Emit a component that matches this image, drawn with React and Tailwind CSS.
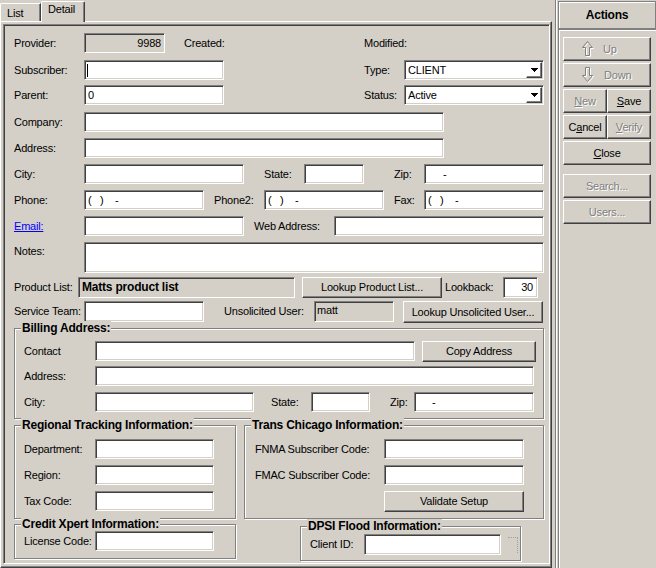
import React from 'react';

// classic win2000 bevels
const sunken = 'border border-t-[#808080] border-l-[#808080] border-b-white border-r-white shadow-[inset_1px_1px_0_#404040,inset_-1px_-1px_0_#d4d0c8]';
const raised = 'border border-t-white border-l-white border-b-[#404040] border-r-[#404040] shadow-[inset_-1px_-1px_0_#808080]';
const etched = 'border border-[#808080] shadow-[inset_1px_1px_0_#ffffff,1px_1px_0_#ffffff]';
const dim = 'text-[#808080] [text-shadow:1px_1px_0_#ffffff]';

function Field({ w, h = 'h-[20px]', gray, className = '', children }) {
  return (
    <div className={`${sunken} ${w} ${h} ${gray ? 'bg-[#d4d0c8]' : 'bg-white'} flex shrink-0 items-center overflow-hidden whitespace-pre ${className}`}>
      {children}
    </div>
  );
}

function Btn({ w, h, disabled, className = '', children }) {
  return (
    <div className={`${raised} ${w} ${h} flex shrink-0 items-center bg-[#d4d0c8] ${disabled ? dim : ''} ${className || 'justify-center'}`}>
      {children}
    </div>
  );
}

function Group({ title, className = '', children }) {
  return (
    <div className={`relative shrink-0 ${etched} ${className}`}>
      <span className="absolute left-[6px] top-[-8px] bg-[#d4d0c8] px-px text-[12px] font-bold leading-[14px] whitespace-nowrap">{title}</span>
      {children}
    </div>
  );
}

function Select({ value }) {
  return (
    <div className={`${sunken} flex h-[20px] w-[140px] shrink-0 items-center bg-white pl-[3px] pr-px`}>
      <span className="flex-1">{value}</span>
      <div className={`${raised} flex h-[16px] w-[16px] items-center justify-center`}>
        <svg width="7" height="4" viewBox="0 0 7 4">
          <path d="M0 0h7v1h-1v1h-1v1h-1v1h-1v-1h-1v-1h-1v-1h-1z" fill="#000" />
        </svg>
      </div>
    </div>
  );
}

function Arrow({ down }) {
  const d = down
    ? 'M5.5 14.5 L10.5 8.5 H7.5 V0.5 H3.5 V8.5 H0.5 Z'
    : 'M5.5 0.5 L10.5 6.5 H7.5 V14.5 H3.5 V6.5 H0.5 Z';
  return (
    <svg width="12" height="16" viewBox="0 0 12 16" className="shrink-0">
      <path d={d} transform="translate(1 1)" fill="none" stroke="#ffffff" />
      <path d={d} fill="none" stroke="#808080" />
    </svg>
  );
}

function Label({ w, className = '', children }) {
  return <span className={`${w} shrink-0 whitespace-nowrap ${className}`}>{children}</span>;
}

export default function App() {
  return (
    <div className="flex h-[568px] w-[656px] overflow-hidden bg-[#d4d0c8] font-['Liberation_Sans',Arial,sans-serif] text-[11px] leading-[13px] tracking-[-0.2px] text-black">
      {/* tab control */}
      <div className="flex w-[552px] shrink-0 flex-col">
        <div className="flex h-[21px] items-end">
          <div className="h-[18px] w-[41px] rounded-tl-[2px] border-l border-t border-white border-r border-r-[#404040] pl-[6px] pt-[3px] shadow-[inset_-1px_0_0_#808080]">List</div>
          <div className="relative z-10 -mb-px h-[21px] w-[44px] rounded-t-[2px] border-l border-t border-white border-r border-r-[#404040] bg-[#d4d0c8] pl-[6px] pt-px shadow-[inset_-1px_0_0_#808080]">Detail</div>
        </div>
        <div className="h-[547px] border border-t-white border-l-white border-r-[#404040] border-b-[#404040] pl-[2px] pt-[2px] shadow-[inset_-1px_-1px_0_#808080]">
          <div className={`${sunken} flex h-[540px] w-[547px] flex-col pl-[10px]`}>
            {/* header rows */}
            <div className="mt-[8px] flex h-[20px] items-center">
              <Label w="w-[70px]">Provider:</Label>
              <Field w="w-[81px]" gray className="justify-end pr-[3px]">9988</Field>
              <Label w="w-[180px]" className="ml-[19px]">Created:</Label>
              <Label w="w-[60px]">Modified:</Label>
            </div>
            <div className="mt-[7px] flex h-[20px] items-center">
              <Label w="w-[70px]">Subscriber:</Label>
              <Field w="w-[140px]" className="pl-[2px]"><span className="h-[13px] w-px bg-black" /></Field>
              <Label w="w-[40px]" className="ml-[140px]">Type:</Label>
              <Select value="CLIENT" />
            </div>
            <div className="mt-[5px] flex h-[20px] items-center">
              <Label w="w-[70px]">Parent:</Label>
              <Field w="w-[140px]" className="pl-[3px]">0</Field>
              <Label w="w-[40px]" className="ml-[140px]">Status:</Label>
              <Select value="Active" />
            </div>
            <div className="mt-[7px] flex h-[20px] items-center">
              <Label w="w-[70px]">Company:</Label>
              <Field w="w-[360px]" />
            </div>
            <div className="mt-[6px] flex h-[20px] items-center">
              <Label w="w-[70px]">Address:</Label>
              <Field w="w-[360px]" />
            </div>
            <div className="mt-[6px] flex h-[20px] items-center">
              <Label w="w-[70px]">City:</Label>
              <Field w="w-[160px]" />
              <Label w="w-[40px]" className="ml-[20px]">State:</Label>
              <Field w="w-[60px]" />
              <Label w="w-[30px]" className="ml-[30px]">Zip:</Label>
              <Field w="w-[120px]" className="pl-[18px]">-</Field>
            </div>
            <div className="mt-[6px] flex h-[20px] items-center">
              <Label w="w-[70px]">Phone:</Label>
              <Field w="w-[120px]" className="pl-[3px]">{'(   )    -'}</Field>
              <Label w="w-[50px]" className="ml-[10px]">Phone2:</Label>
              <Field w="w-[120px]" className="pl-[3px]">{'(   )    -'}</Field>
              <Label w="w-[30px]" className="ml-[10px]">Fax:</Label>
              <Field w="w-[120px]" className="pl-[3px]">{'(   )    -'}</Field>
            </div>
            <div className="mt-[6px] flex h-[20px] items-center">
              <Label w="w-[70px]"><span className="text-[#0000ff] underline">Email:</span></Label>
              <Field w="w-[160px]" />
              <Label w="w-[80px]" className="ml-[10px]">Web Address:</Label>
              <Field w="w-[210px]" />
            </div>
            <div className="mt-[6px] flex h-[31px] items-start">
              <Label w="w-[70px]" className="pt-[3px]">Notes:</Label>
              <Field w="w-[460px]" h="h-[31px]" />
            </div>
            <div className="mt-[3px] flex h-[22px] items-center">
              <Label w="w-[64px]">Product List:</Label>
              <Field w="w-[217px]" h="h-[21px]" gray className="pl-[3px] text-[12px] font-bold">Matts product list</Field>
              <Btn w="w-[140px]" h="h-[21px]" className="ml-[7px] justify-center">Lookup Product List...</Btn>
              <Label w="w-[58px]" className="ml-[3px]">Lookback:</Label>
              <Field w="w-[35px]" h="h-[21px]" className="justify-end pr-[4px]">30</Field>
            </div>
            <div className="mt-[3px] flex h-[22px] items-start">
              <Label w="w-[70px]" className="pt-[4px]">Service Team:</Label>
              <Field w="w-[120px]" h="h-[21px]" />
              <Label w="w-[90px]" className="ml-[20px] pt-[4px]">Unsolicited User:</Label>
              <Field w="w-[80px]" h="h-[21px]" gray className="items-start pl-[2px] pt-[2px]">matt</Field>
              <Btn w="w-[140px]" h="h-[22px]" className="ml-[9px] justify-center">Lookup Unsolicited User...</Btn>
            </div>

            {/* billing */}
            <Group title="Billing Address:" className="mt-[5px] h-[91px] w-[530px] pl-[9px] pt-[12px]">
              <div className="flex h-[20px] items-start">
                <Label w="w-[71px]" className="pt-[4px]">Contact</Label>
                <Field w="w-[320px]" />
                <Btn w="w-[114px]" h="h-[21px]" className="ml-[7px] justify-center">Copy Address</Btn>
              </div>
              <div className="mt-[5px] flex h-[20px] items-center">
                <Label w="w-[71px]">Address:</Label>
                <Field w="w-[439px]" />
              </div>
              <div className="mt-[6px] flex h-[20px] items-center">
                <Label w="w-[71px]">City:</Label>
                <Field w="w-[159px]" />
                <Label w="w-[40px]" className="ml-[17px]">State:</Label>
                <Field w="w-[59px]" />
                <Label w="w-[24px]" className="ml-[20px]">Zip:</Label>
                <Field w="w-[120px]" className="pl-[17px]">-</Field>
              </div>
            </Group>

            <div className="mt-[6px] flex">
              <Group title="Regional Tracking Information:" className="h-[94px] w-[222px] pl-[9px] pt-[13px]">
                <div className="flex h-[20px] items-center">
                  <Label w="w-[71px]">Department:</Label>
                  <Field w="w-[119px]" />
                </div>
                <div className="mt-[6px] flex h-[20px] items-center">
                  <Label w="w-[71px]">Region:</Label>
                  <Field w="w-[119px]" />
                </div>
                <div className="mt-[6px] flex h-[20px] items-center">
                  <Label w="w-[71px]">Tax Code:</Label>
                  <Field w="w-[119px]" />
                </div>
              </Group>
              <Group title="Trans Chicago Information:" className="ml-[8px] h-[94px] w-[300px] pl-[10px] pt-[13px]">
                <div className="flex h-[20px] items-center">
                  <Label w="w-[129px]">FNMA Subscriber Code:</Label>
                  <Field w="w-[140px]" />
                </div>
                <div className="mt-[6px] flex h-[20px] items-center">
                  <Label w="w-[129px]">FMAC Subscriber Code:</Label>
                  <Field w="w-[140px]" />
                </div>
                <div className="mt-[6px] flex h-[21px] items-center">
                  <Btn w="w-[140px]" h="h-[21px]" className="ml-[129px] justify-center">Validate Setup</Btn>
                </div>
              </Group>
            </div>

            <div className="mt-[5px] flex items-start">
              <Group title="Credit Xpert Information:" className="h-[35px] w-[222px] pl-[9px] pt-[6px]">
                <div className="flex h-[20px] items-center">
                  <Label w="w-[71px]">License Code:</Label>
                  <Field w="w-[119px]" />
                </div>
              </Group>
              <Group title="DPSI Flood Information:" className="ml-[64px] mt-[2px] h-[35px] w-[221px] pl-[9px] pt-[7px]">
                <div className="flex h-[21px] items-center">
                  <Label w="w-[54px]">Client ID:</Label>
                  <Field w="w-[137px]" h="h-[21px]" />
                  <span className="ml-[7px] h-[16px] w-[10px] border-r border-t border-dotted border-[#a0a0a0]" />
                </div>
              </Group>
            </div>
          </div>
        </div>
      </div>

      {/* splitter */}
      <div className="w-[3px] shrink-0" />

      {/* actions */}
      <div className="flex w-[101px] shrink-0 flex-col border-l border-[#808080] shadow-[inset_1px_0_0_#ffffff]">
        <div className={`${etched} ml-[2px] mt-px flex h-[28px] w-[98px] items-center justify-center text-[12px] font-bold`}>Actions</div>
        <div className="ml-[2px] flex flex-1 flex-col gap-[2px] border-l border-t border-[#808080] pl-[4px] pt-[7px] shadow-[inset_1px_1px_0_#ffffff]">
          <Btn w="w-[88px]" h="h-[24px]" disabled className="justify-start gap-[9px] pl-[18px]">
            <Arrow />
            <span>Up</span>
          </Btn>
          <Btn w="w-[88px]" h="h-[24px]" disabled className="justify-start gap-[10px] pl-[18px]">
            <Arrow down />
            <span>Down</span>
          </Btn>
          <div className="flex">
            <Btn w="w-[44px]" h="h-[24px]" disabled><span><u>N</u>ew</span></Btn>
            <Btn w="w-[44px]" h="h-[24px]"><span><u>S</u>ave</span></Btn>
          </div>
          <div className="flex">
            <Btn w="w-[44px]" h="h-[24px]"><span>C<u>a</u>ncel</span></Btn>
            <Btn w="w-[44px]" h="h-[24px]" disabled><span><u>V</u>erify</span></Btn>
          </div>
          <Btn w="w-[88px]" h="h-[24px]"><span><u>C</u>lose</span></Btn>
          <Btn w="w-[88px]" h="h-[24px]" disabled className="mt-[7px] justify-center">Search...</Btn>
          <Btn w="w-[88px]" h="h-[24px]" disabled>Users...</Btn>
        </div>
      </div>
    </div>
  );
}
